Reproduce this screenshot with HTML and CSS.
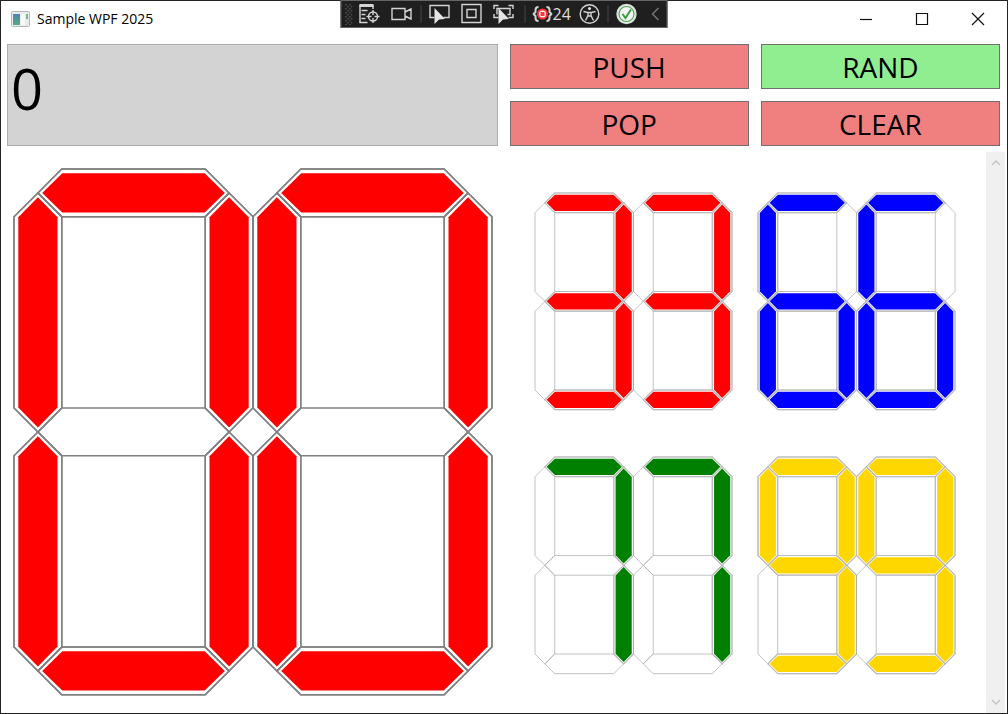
FILE: index.html
```html
<!DOCTYPE html>
<html lang="en">
<head>
<meta charset="utf-8">
<title>Sample WPF 2025</title>
<link rel="stylesheet" href="styles.css">
</head>
<body>
<svg class="defs" aria-hidden="true">
  <defs>
    <path id="cell-h" d="M10 10L20 0H80L90 10L80 20H20Z"/>
    <path id="cell-v" d="M10 10L20 20V100L10 110L0 100V20Z"/>
    <g id="frame">
      <use href="#cell-h"/><use href="#cell-h" y="100"/><use href="#cell-h" y="200"/>
      <use href="#cell-v"/><use href="#cell-v" x="80"/>
      <use href="#cell-v" y="100"/><use href="#cell-v" x="80" y="100"/>
    </g>
    <g id="h"><use href="#cell-h" class="halo"/><path class="lit" d="M11.8 10L20.2 1.8H79.8L88.2 10L79.8 18.2H20.2Z"/></g>
    <g id="v"><use href="#cell-v" class="halo"/><path class="lit" d="M10 11.8L18.2 20.2V99.8L10 108.2L1.8 99.8V20.2Z"/></g>
    <g id="d0"><use href="#frame"/><use href="#h"/><use href="#h" y="200"/><use href="#v"/><use href="#v" x="80"/><use href="#v" y="100"/><use href="#v" x="80" y="100"/></g>
    <g id="d3"><use href="#frame"/><use href="#h"/><use href="#h" y="100"/><use href="#h" y="200"/><use href="#v" x="80"/><use href="#v" x="80" y="100"/></g>
    <g id="d6"><use href="#frame"/><use href="#h"/><use href="#h" y="100"/><use href="#h" y="200"/><use href="#v"/><use href="#v" y="100"/><use href="#v" x="80" y="100"/></g>
    <g id="d7"><use href="#frame"/><use href="#h"/><use href="#v" x="80"/><use href="#v" x="80" y="100"/></g>
    <g id="d9"><use href="#frame"/><use href="#h"/><use href="#h" y="100"/><use href="#h" y="200"/><use href="#v"/><use href="#v" x="80"/><use href="#v" x="80" y="100"/></g>
  </defs>
</svg>

<div class="window">
  <header class="titlebar">
    <svg class="app-icon" viewBox="0 0 19 16" aria-hidden="true">
      <defs><linearGradient id="pane" x1="0" y1="0" x2="0" y2="1"><stop offset="0" stop-color="#4d83b4"/><stop offset="1" stop-color="#58ab7c"/></linearGradient></defs>
      <rect x=".5" y=".5" width="18" height="15" rx="1" fill="#e9ebec" stroke="#b4b8bb"/>
      <rect x="2" y="3" width="7" height="11" fill="url(#pane)"/>
      <rect x="10" y="3" width="4" height="11" fill="#f8f8f8"/>
      <rect x="15" y="3" width="2" height="5" fill="#79b59b"/>
    </svg>
    <h1 class="title">Sample WPF 2025</h1>
    <div class="window-buttons">
      <button class="window-button" aria-label="Minimize"><svg viewBox="0 0 14 14"><path d="M1 7.5H13"/></svg></button>
      <button class="window-button" aria-label="Maximize"><svg viewBox="0 0 14 14"><path d="M1.5 1.5H12.5V12.5H1.5Z"/></svg></button>
      <button class="window-button" aria-label="Close"><svg viewBox="0 0 14 14"><path d="M1 1L13 13M13 1L1 13"/></svg></button>
    </div>
  </header>

  <div class="debug-bar" role="toolbar" aria-label="Debug tools">
    <svg class="grip" viewBox="0 0 8 22" aria-hidden="true"><path d="M1.5 1V22M5.5 1V22" stroke="#555" stroke-width="1.4" stroke-dasharray="1.4 2.6"/><path d="M3.5 3V22M7.3 3V22" stroke="#555" stroke-width="1.4" stroke-dasharray="1.4 2.6"/></svg>
    <button class="tool tree" aria-label="Live visual tree"><svg viewBox="0 0 22 22"><path d="M1 2.5H15" stroke-width="3"/><path d="M3 7.5H9M3 11.5H7M3 15.5H7M1 19.5H9"/><path d="M1.5 2V20M14.5 2V6"/><circle cx="14.5" cy="13.5" r="4.5"/><path d="M14.5 7V12M14.5 15V20M8 13.5H13M16 13.5H21"/></svg></button>
    <button class="tool camera" aria-label="Record"><svg viewBox="0 0 22 22"><path d="M1.5 5.5H14.5V16.5H1.5ZM14.5 9L20.5 6V16L14.5 13"/></svg></button>
    <span class="divider"></span>
    <button class="tool" aria-label="Select element"><svg viewBox="0 0 22 22"><path d="M6 14.5H1.5V2.5H20.5V14.5H15"/><path class="solid" d="M6 5V21L10.5 16.5L16.5 16Z"/></svg></button>
    <button class="tool" aria-label="Display layout adorners"><svg viewBox="0 0 22 22"><path d="M1.5 1.5H20.5V19.5H1.5ZM6.5 6.5H15.5V14.5H6.5Z"/></svg></button>
    <button class="tool" aria-label="Track focused element"><svg viewBox="0 0 22 22"><path d="M1.5 6V2.5H6M16 2.5H20.5V6M1.5 11V14.5H6M16 14.5H20.5V11M4.5 11.5V5.5H17.5V11.5H15"/><path class="solid" d="M6 5V21L10.5 16.5L16.5 16Z"/></svg></button>
    <span class="divider"></span>
    <button class="tool errors" aria-label="Binding failures 24"><svg viewBox="0 0 20 22"><path d="M6 4Q3 4 3 7V9L1 11L3 13V15Q3 18 6 18M14 4Q17 4 17 7V9L19 11L17 13V15Q17 18 14 18" stroke-width="2"/><circle cx="10" cy="11" r="4.5" fill="#fff" stroke="#f33" stroke-width="2"/><rect x="8" y="9" width="4" height="4" fill="#f33" stroke="none"/></svg><span>24</span></button>
    <button class="tool person" aria-label="Accessibility"><svg viewBox="0 0 22 22"><circle cx="11" cy="11" r="9.3"/><circle class="solid" cx="11" cy="5.5" r="1.5"/><path d="M5 8.5L9.5 9.5V12.5L7 17.5M17 8.5L12.5 9.5V12.5L15 17.5M9.5 9.5H12.5M9.5 13H12.5"/></svg></button>
    <span class="divider"></span>
    <button class="tool ok" aria-label="Hot reload ready"><svg viewBox="0 0 22 22"><circle cx="11" cy="11" r="9.5" fill="#f4f4f4" stroke="#ddd"/><circle cx="11" cy="11" r="7.5" stroke="#4ba554" stroke-width="1.2"/><path d="M7 11L10 15L15.5 6.5" stroke="#389c43" stroke-width="2"/></svg></button>
    <button class="tool collapse" aria-label="Collapse"><svg viewBox="0 0 8 14"><path d="M7 1L1 7L7 13" stroke="#777"/></svg></button>
  </div>

  <section class="controls">
    <input class="display" type="text" value="0" aria-label="Value">
    <button class="command">PUSH</button>
    <button class="command random">RAND</button>
    <button class="command">POP</button>
    <button class="command">CLEAR</button>
  </section>

  <main class="viewer">
    <div class="panels">
      <svg class="digits large red" viewBox="0 0 200 220" role="img" aria-label="00"><use href="#d0"/><use href="#d0" x="100"/></svg>
      <div class="stack">
        <svg class="digits red" viewBox="0 0 200 220" role="img" aria-label="33"><use href="#d3"/><use href="#d3" x="100"/></svg>
        <svg class="digits blue" viewBox="0 0 200 220" role="img" aria-label="66"><use href="#d6"/><use href="#d6" x="100"/></svg>
        <svg class="digits green" viewBox="0 0 200 220" role="img" aria-label="77"><use href="#d7"/><use href="#d7" x="100"/></svg>
        <svg class="digits gold" viewBox="0 0 200 220" role="img" aria-label="99"><use href="#d9"/><use href="#d9" x="100"/></svg>
      </div>
    </div>
    <div class="scrollbar">
      <button class="scroll-button" aria-label="Scroll up"><svg viewBox="0 0 10 6"><path d="M1 5L5 1L9 5"/></svg></button>
      <button class="scroll-button" aria-label="Scroll down"><svg viewBox="0 0 10 6"><path d="M1 1L5 5L9 1"/></svg></button>
    </div>
  </main>
</div>
</body>
</html>
```
FILE: styles.css
```css
* { box-sizing: border-box; }

body {
  margin: 0;
  font-family: "Open Sans", "Noto Sans", sans-serif;
  color: #000;
  background: #fff;
}

button {
  margin: 0;
  padding: 0;
  border: 0;
  background: none;
  font: inherit;
  color: inherit;
}

svg { display: block; fill: none; }

.defs { position: absolute; width: 0; height: 0; }

.window {
  position: relative;
  display: flex;
  flex-direction: column;
  min-height: 100vh;
  border: 1px solid #242424;
  background: #fff;
}

.titlebar {
  display: flex;
  align-items: center;
  height: 36px;
  padding: 0 1px 0 10px;
}

.app-icon { width: 19px; height: 16px; }

.title {
  flex: 1;
  margin: 0 0 0 7px;
  font-size: 14px;
  font-weight: 400;
  line-height: 20px;
}

.window-buttons { display: flex; }

.window-button {
  display: grid;
  place-items: center;
  width: 56px;
  height: 36px;
}

.window-button svg { width: 14px; height: 14px; stroke: #111; stroke-width: 1.2; }

.debug-bar {
  position: absolute;
  top: -1px;
  left: 50%;
  transform: translateX(-50%);
  display: flex;
  align-items: center;
  width: 327px;
  height: 28px;
  padding: 0 7px 0 3px;
  border: 1px solid #666;
  background: #1f1f1f;
  color: #ddd;
}

.grip { flex: none; width: 8px; height: 22px; }

.tool {
  display: flex;
  flex: none;
  align-items: center;
  margin-right: 10px;
}

.tool svg { width: 22px; height: 22px; stroke: #d4d4d4; stroke-width: 1.4; }
.tool .solid { fill: #e4e4e4; stroke: none; }
.tree { margin: 0 10px 0 6px; }
.camera { margin-right: 8px; }

.divider {
  flex: none;
  width: 1px;
  height: 18px;
  margin-right: 7px;
  background: #444;
}

.debug-bar .errors { margin-right: 8px; }
.errors svg { width: 20px; }
.errors span { font-size: 16px; line-height: 20px; }
.debug-bar .person { margin-right: 7px; }
.debug-bar .ok { margin-right: 14px; }
.debug-bar .collapse { margin: 0; }
.debug-bar .collapse svg { width: 8px; height: 14px; }

.controls {
  display: grid;
  grid-template-columns: repeat(4, 1fr);
  grid-template-rows: 45px 45px;
  gap: 12px;
  padding: 7px 7px 6px 6px;
}

.display {
  grid-column: span 2;
  grid-row: span 2;
  width: 100%;
  height: 100%;
  padding: 0 4px 14px 3px;
  border: 1px solid #abadb3;
  border-radius: 0;
  background: #d3d3d3;
  font: inherit;
  font-size: 56px;
  outline: 0;
}

.command {
  border: 1px solid #707070;
  background: #f08080;
  font-size: 28px;
  line-height: 40px;
}

.random { background: #90ee90; }

.viewer { flex: 1; display: flex; }

.panels {
  flex: 1;
  display: grid;
  grid-template-columns: 478fr 446fr;
  align-items: start;
  gap: 30px;
  padding: 17px 18px 16px 13px;
}

.stack {
  display: grid;
  grid-template-columns: 1fr 1fr;
  align-content: space-around;
  align-self: stretch;
}

.digits {
  --halo: #bcbcbc;
  --halo-width: 1.2;
  width: 100%;
  height: auto;
  padding: 0 13px;
  overflow: visible;
  stroke: #a8a8a8;
  stroke-width: 0.7;
}

.large {
  --halo: #808080;
  --halo-width: 0.6;
  padding: 0;
  stroke: #808080;
  stroke-width: 0.6;
}

.halo { stroke: var(--halo); stroke-width: var(--halo-width); }
.lit { fill: currentColor; stroke: none; }

.red { color: #f00; }
.blue { color: #00f; }
.green { color: #008000; }
.gold { color: #ffd700; }

.scrollbar {
  display: flex;
  flex-direction: column;
  justify-content: space-between;
  width: 19px;
  margin-right: 2px;
  background: #f0f0f0;
}

.scroll-button {
  display: grid;
  place-items: center;
  height: 22px;
}

.scroll-button svg { width: 10px; height: 6px; stroke: #c4c4c4; stroke-width: 1.4; }
```
